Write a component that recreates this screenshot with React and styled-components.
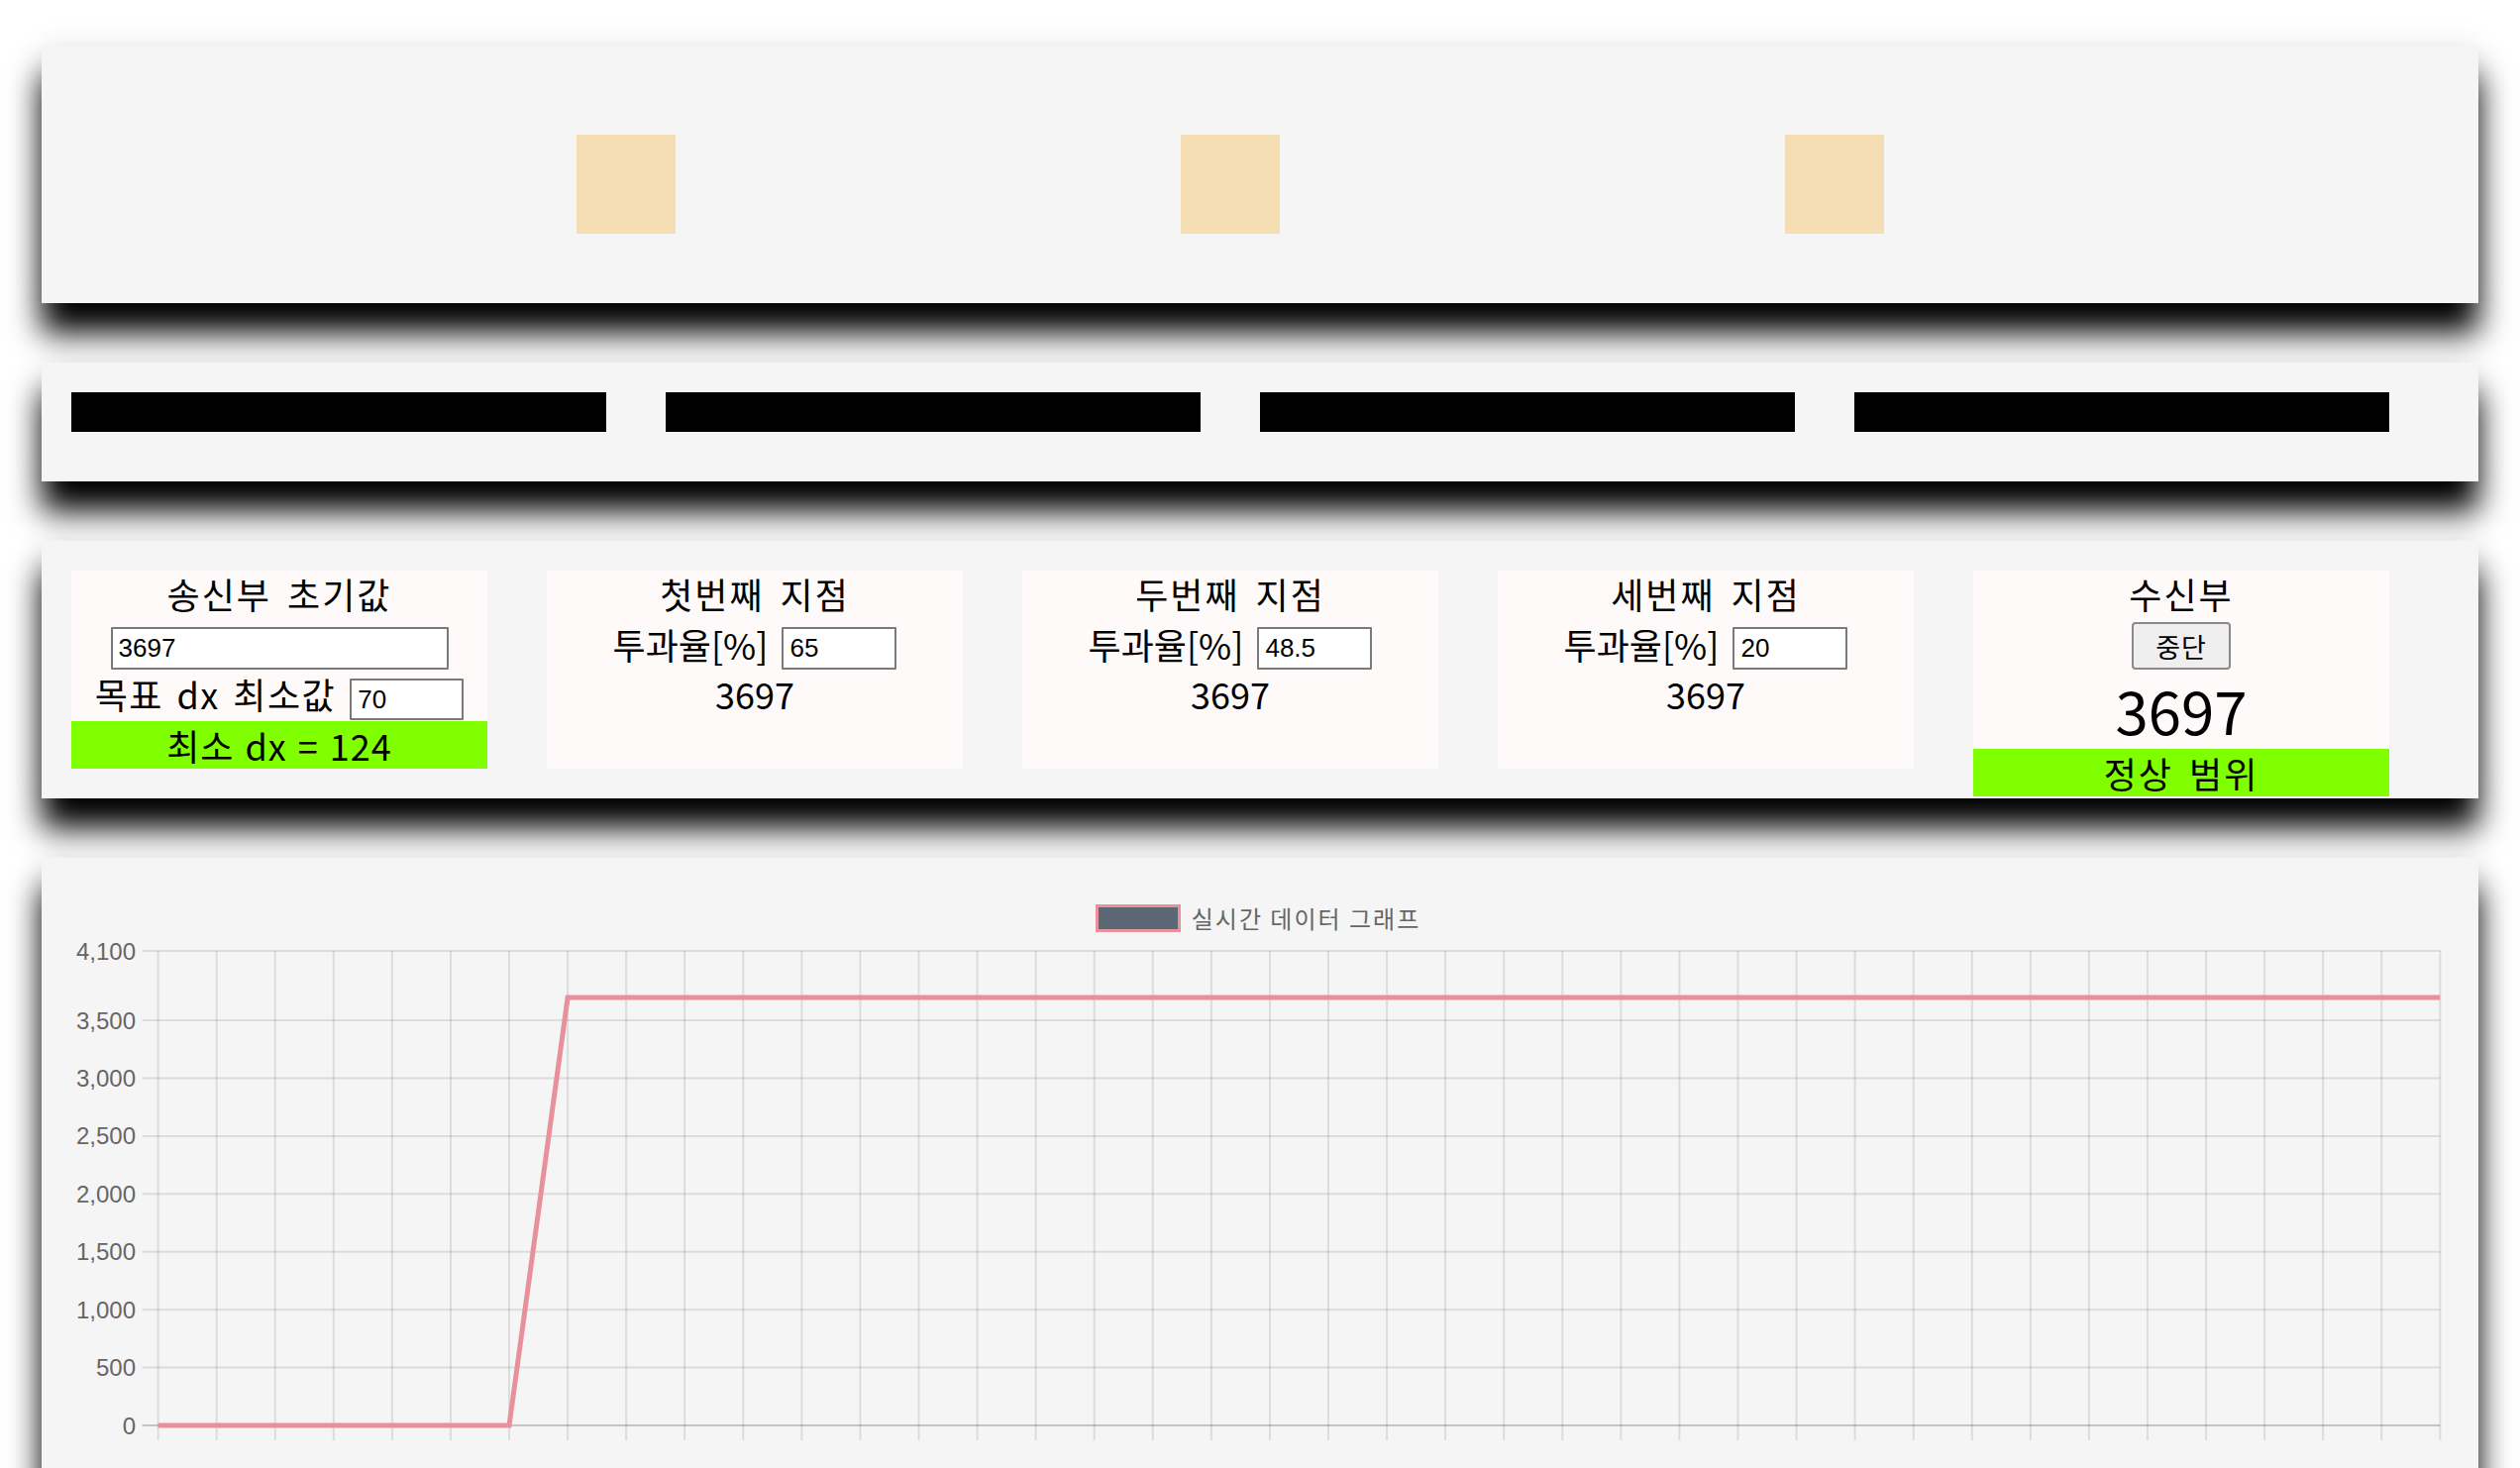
import React from "react";
import styled, { createGlobalStyle } from "styled-components";

const GlobalStyle = createGlobalStyle`
    body {
        margin: 0;
        background: #ffffff;
        font-family: "Noto Sans CJK KR", "Noto Sans", sans-serif;
        color: #000;
    }
`;

const Y_TICKS = [4100, 3500, 3000, 2500, 2000, 1500, 1000, 500, 0];
const POINTS = Array.from({length: 40}, (_, i) => (i < 7 ? 0 : 3697));
const X0 = 117.6;
const STEP = 59.07;
const TOP = 10;
const BASE = 489;
const MAX = 4100;

const yOf = (v) => BASE - (v / MAX) * (BASE - TOP);
const xOf = (i) => X0 + i * STEP;

const Points = [
    {title: "첫번째 지점", rate: "65"},
    {title: "두번째 지점", rate: "48.5"},
    {title: "세번째 지점", rate: "20"},
];

const App = () => {
    const linePoints = POINTS.map((v, i) => `${xOf(i)},${yOf(v)}`).join(" ");
    const right = xOf(POINTS.length - 1);

    return (
        <>
        <GlobalStyle/>
        <Page>
            <LampPanel>
                <Lamp/>
                <Lamp/>
                <Lamp/>
            </LampPanel>

            <BarPanel>
                <Bar/>
                <Bar/>
                <Bar/>
                <Bar/>
            </BarPanel>

            <CardPanel>
                <Card>
                    <Title>송신부 초기값</Title>
                    <Row $mt={5} $h={43}>
                        <Input $w={341} defaultValue="3697"/>
                    </Row>
                    <Row $h={52} $pt={8}>
                        <Label $lift={6} $spaced>목표 dx 최소값</Label>
                        <Input $w={115} $h={42} defaultValue="70"/>
                    </Row>
                    <Status>최소 dx = 124</Status>
                </Card>

                {Points.map((p) => (
                    <Card key={p.title}>
                        <Title>{p.title}</Title>
                        <Row $mt={5} $h={43}>
                            <Label $lift={5}>투과율[%]</Label>
                            <Input $w={116} defaultValue={p.rate}/>
                        </Row>
                        <Value>3697</Value>
                    </Card>
                ))}

                <Card $auto>
                    <Title>수신부</Title>
                    <StopButton>중단</StopButton>
                    <BigValue>3697</BigValue>
                    <Status $wide>정상 범위</Status>
                </Card>
            </CardPanel>

            <ChartPanel>
                <Legend>
                    <LegendBox/>
                    <LegendText>실시간 데이터 그래프</LegendText>
                </Legend>
                <Chart width="2460" height="560" viewBox="0 0 2460 560">
                    {POINTS.map((_, i) => (
                        <line key={`v${i}`} x1={xOf(i)} x2={xOf(i)} y1={TOP} y2={BASE + 15}
                            stroke="rgba(0,0,0,0.1)" strokeWidth="2"/>
                    ))}
                    {Y_TICKS.map((t) => (
                        <g key={t}>
                            <line x1={X0 - 16} x2={right} y1={yOf(t)} y2={yOf(t)}
                                stroke={t === 0 ? "rgba(0,0,0,0.2)" : "rgba(0,0,0,0.1)"} strokeWidth="2"/>
                            <text x={95} y={yOf(t)} textAnchor="end" dominantBaseline="central"
                                fontFamily="'Liberation Sans', Arial, sans-serif" fontSize="24" fill="#666">
                                {t.toLocaleString("en-US")}
                            </text>
                        </g>
                    ))}
                    <polyline points={linePoints} fill="none" stroke="#e8909b" strokeWidth="5"
                        strokeLinejoin="miter"/>
                </Chart>
            </ChartPanel>
        </Page>
        </>
    )
};

export default App;


const Page = styled.div`
    display: flex;
    flex-direction: column;
    gap: 60px;
    padding: 46px 42px 0;
`
const Panel = styled.section`
    background: whitesmoke;
    box-shadow: 0 30px 30px #000, 0 0 30px rgba(0, 0, 0, 0.08);
`
const LampPanel = styled(Panel)`
    display: flex;
    gap: 510px;
    height: 260px;
    box-sizing: border-box;
    padding: 90px 0 0 540px;
`
const Lamp = styled.div`
    width: 100px;
    height: 100px;
    background: wheat;
`
const BarPanel = styled(Panel)`
    display: flex;
    gap: 60px;
    padding: 30px 30px 50px;
`
const Bar = styled.div`
    flex: 0 0 540px;
    height: 40px;
    background: #000;
`
const CardPanel = styled(Panel)`
    display: flex;
    align-items: flex-start;
    gap: 60px;
    padding: 30px 30px 2px;
`
const Card = styled.div`
    flex: 0 0 420px;
    height: ${(p) => (p.$auto ? "auto" : "200px")};
    background: snow;
    display: flex;
    flex-direction: column;
    align-items: center;
    font-size: 36px;
    white-space: nowrap;
`
const Title = styled.div`
    height: 52px;
    box-sizing: border-box;
    line-height: 46px;
    padding-bottom: 6px;
    letter-spacing: 2px;
    word-spacing: 6px;
`
const Row = styled.div`
    display: flex;
    align-items: center;
    justify-content: center;
    gap: 14px;
    box-sizing: border-box;
    height: ${(p) => p.$h}px;
    margin-top: ${(p) => p.$mt || 0}px;
    padding-top: ${(p) => p.$pt || 0}px;
`
const Label = styled.span`
    line-height: 44px;
    position: relative;
    top: -${(p) => p.$lift}px;
    letter-spacing: ${(p) => (p.$spaced ? "1.5px" : "0")};
    word-spacing: 4px;
`
const Input = styled.input`
    box-sizing: border-box;
    width: ${(p) => p.$w}px;
    height: ${(p) => p.$h || 43}px;
    border: 2px solid #7a7a7a;
    border-radius: 1px;
    background: #fff;
    padding: 0 6px;
    font-family: "Liberation Sans", Arial, sans-serif;
    font-size: 26px;
    color: #000;
`
const Value = styled.div`
    line-height: 48px;
    height: 52px;
`
const StopButton = styled.button`
    width: 100px;
    height: 48px;
    box-sizing: border-box;
    background: #efefef;
    border: 2px solid #8a8a8a;
    border-radius: 4px;
    font-family: "Noto Sans CJK KR", sans-serif;
    font-size: 27px;
    letter-spacing: 1px;
    color: #000;
    padding: 0;
`
const BigValue = styled.div`
    height: 80px;
    line-height: 80px;
    font-size: 60px;
`
const Status = styled.div`
    align-self: stretch;
    height: 48px;
    line-height: 48px;
    text-align: center;
    background: chartreuse;
    letter-spacing: ${(p) => (p.$wide ? "2px" : "1px")};
    word-spacing: ${(p) => (p.$wide ? "6px" : "2px")};
`
const ChartPanel = styled(Panel)`
    padding-top: 47px;
    height: 700px;
    box-sizing: border-box;
`
const Legend = styled.div`
    display: flex;
    justify-content: center;
    align-items: center;
    gap: 11px;
    height: 28px;
    margin-left: -4px;
`
const LegendBox = styled.div`
    width: 86px;
    height: 28px;
    box-sizing: border-box;
    border: 3px solid #e8909b;
    background: #5b6775;
`
const LegendText = styled.span`
    font-size: 24px;
    line-height: 28px;
    letter-spacing: 2px;
    color: #666;
`
const Chart = styled.svg`
    display: block;
    margin-top: 9px;
`
